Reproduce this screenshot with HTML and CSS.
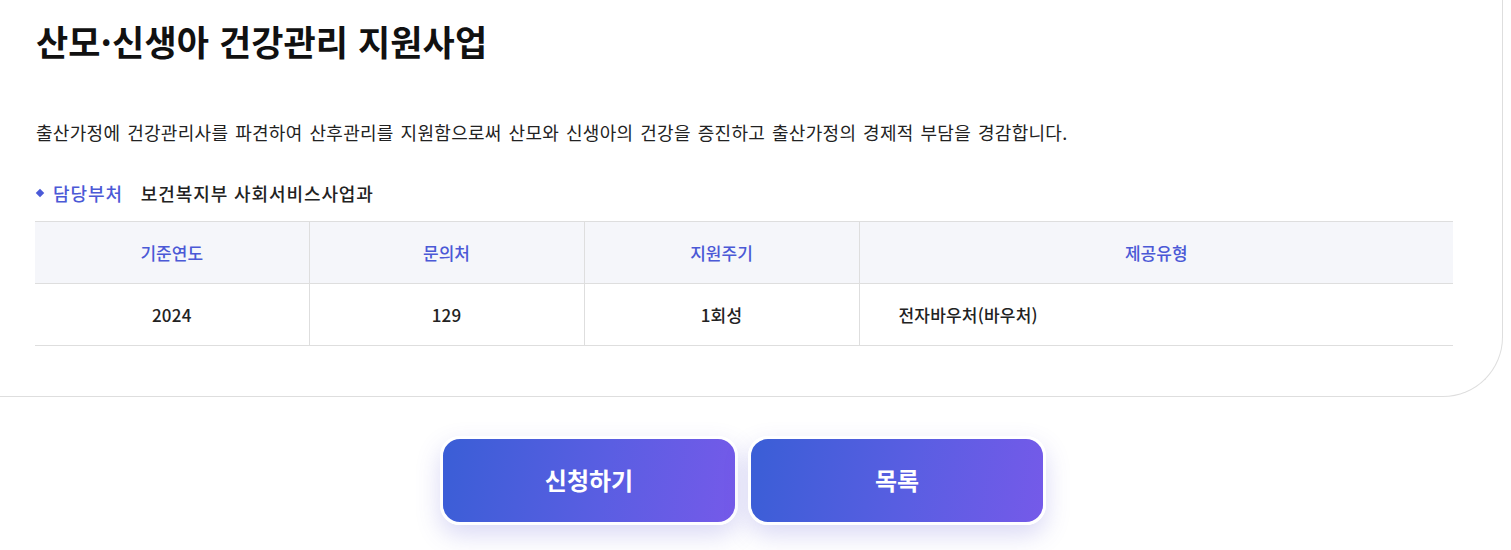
FILE: index.html
```html
<!DOCTYPE html>
<html lang="ko">
<head>
<meta charset="utf-8">
<link rel="stylesheet" href="styles.css">
</head>
<body>
<section class="card">
  <h1 class="title">산모·신생아 건강관리 지원사업</h1>
  <p class="desc">출산가정에 건강관리사를 파견하여 산후관리를 지원함으로써 산모와 신생아의 건강을 증진하고 출산가정의 경제적 부담을 경감합니다.</p>
  <div class="dept">
    <span class="bullet"></span>
    <span class="dept-label">담당부처</span>
    <span class="dept-name">보건복지부 사회서비스사업과</span>
  </div>
  <table class="info">
    <colgroup>
      <col class="c1"><col class="c2"><col class="c3"><col class="c4">
    </colgroup>
    <thead>
      <tr><th>기준연도</th><th>문의처</th><th>지원주기</th><th>제공유형</th></tr>
    </thead>
    <tbody>
      <tr><td>2024</td><td>129</td><td>1회성</td><td class="left">전자바우처(바우처)</td></tr>
    </tbody>
  </table>
</section>
<div class="actions">
  <a class="btn" href="#">신청하기</a>
  <a class="btn" href="#">목록</a>
</div>
</body>
</html>
```
FILE: styles.css
```css
* { box-sizing: border-box; }
html, body { margin: 0; padding: 0; background: #ffffff; }
body {
  font-family: "Noto Sans CJK KR", "Noto Sans", sans-serif;
  color: #222;
  width: 1511px;
  height: 550px;
  overflow: hidden;
}
.card {
  width: 1503px;
  background: #fff;
  border-right: 1px solid #dedede;
  border-bottom: 1px solid #dedede;
  border-bottom-right-radius: 60px;
  padding: 19px 0 50px 35px;
}
.title {
  margin: 0 0 0 1px;
  font-size: 35px;
  line-height: 44px;
  font-weight: 700;
  letter-spacing: 0.1px;
  color: #111;
}
.desc {
  margin: 55px 0 0 1px;
  font-size: 18px;
  line-height: 28px;
  letter-spacing: 0.3px;
  word-spacing: 1.5px;
  color: #222;
}
.dept {
  margin-top: 35px;
  display: flex;
  align-items: center;
  height: 24px;
  font-size: 18px;
  font-weight: 500;
  letter-spacing: 0.9px;
}
.bullet {
  width: 6px;
  height: 6px;
  background: #4a5ad8;
  transform: rotate(45deg);
  margin: 0 10px 0 2px;
}
.dept-label { color: #4b59d6; margin-right: 18px; }
.dept-name { color: #222; }
.info {
  margin-top: 16px;
  width: 1418px;
  border-collapse: collapse;
  table-layout: fixed;
  font-size: 17px;
  font-weight: 500;
}
.c1 { width: 274px; }
.c2 { width: 275px; }
.c3 { width: 275px; }
.info th, .info td {
  height: 62px;
  text-align: center;
  border-top: 1px solid #dedede;
  border-bottom: 1px solid #dedede;
  border-left: 1px solid #dedede;
  padding: 0;
}
.info th:first-child, .info td:first-child { border-left: none; }
.info th {
  background: #f5f6fa;
  color: #4b59d6;
  font-weight: 500;
}
.info td { color: #222; letter-spacing: 0.2px; }
.info td.left { text-align: left; padding-left: 39px; }
.actions {
  display: flex;
  justify-content: center;
  gap: 10px;
  padding-right: 25px;
  margin-top: 39px;
}
.btn {
  width: 298px;
  height: 89px;
  border: 3px solid #fff;
  border-radius: 20px;
  background: linear-gradient(100deg, #3a5ed6 0%, #5a5ee2 55%, #755ae9 100%);
  box-shadow: 0 10px 24px rgba(88, 84, 210, 0.22);
  color: #fff;
  font-size: 24px;
  font-weight: 700;
  letter-spacing: 0;
  text-decoration: none;
  display: flex;
  align-items: center;
  justify-content: center;
  padding-bottom: 3px;
}
```
